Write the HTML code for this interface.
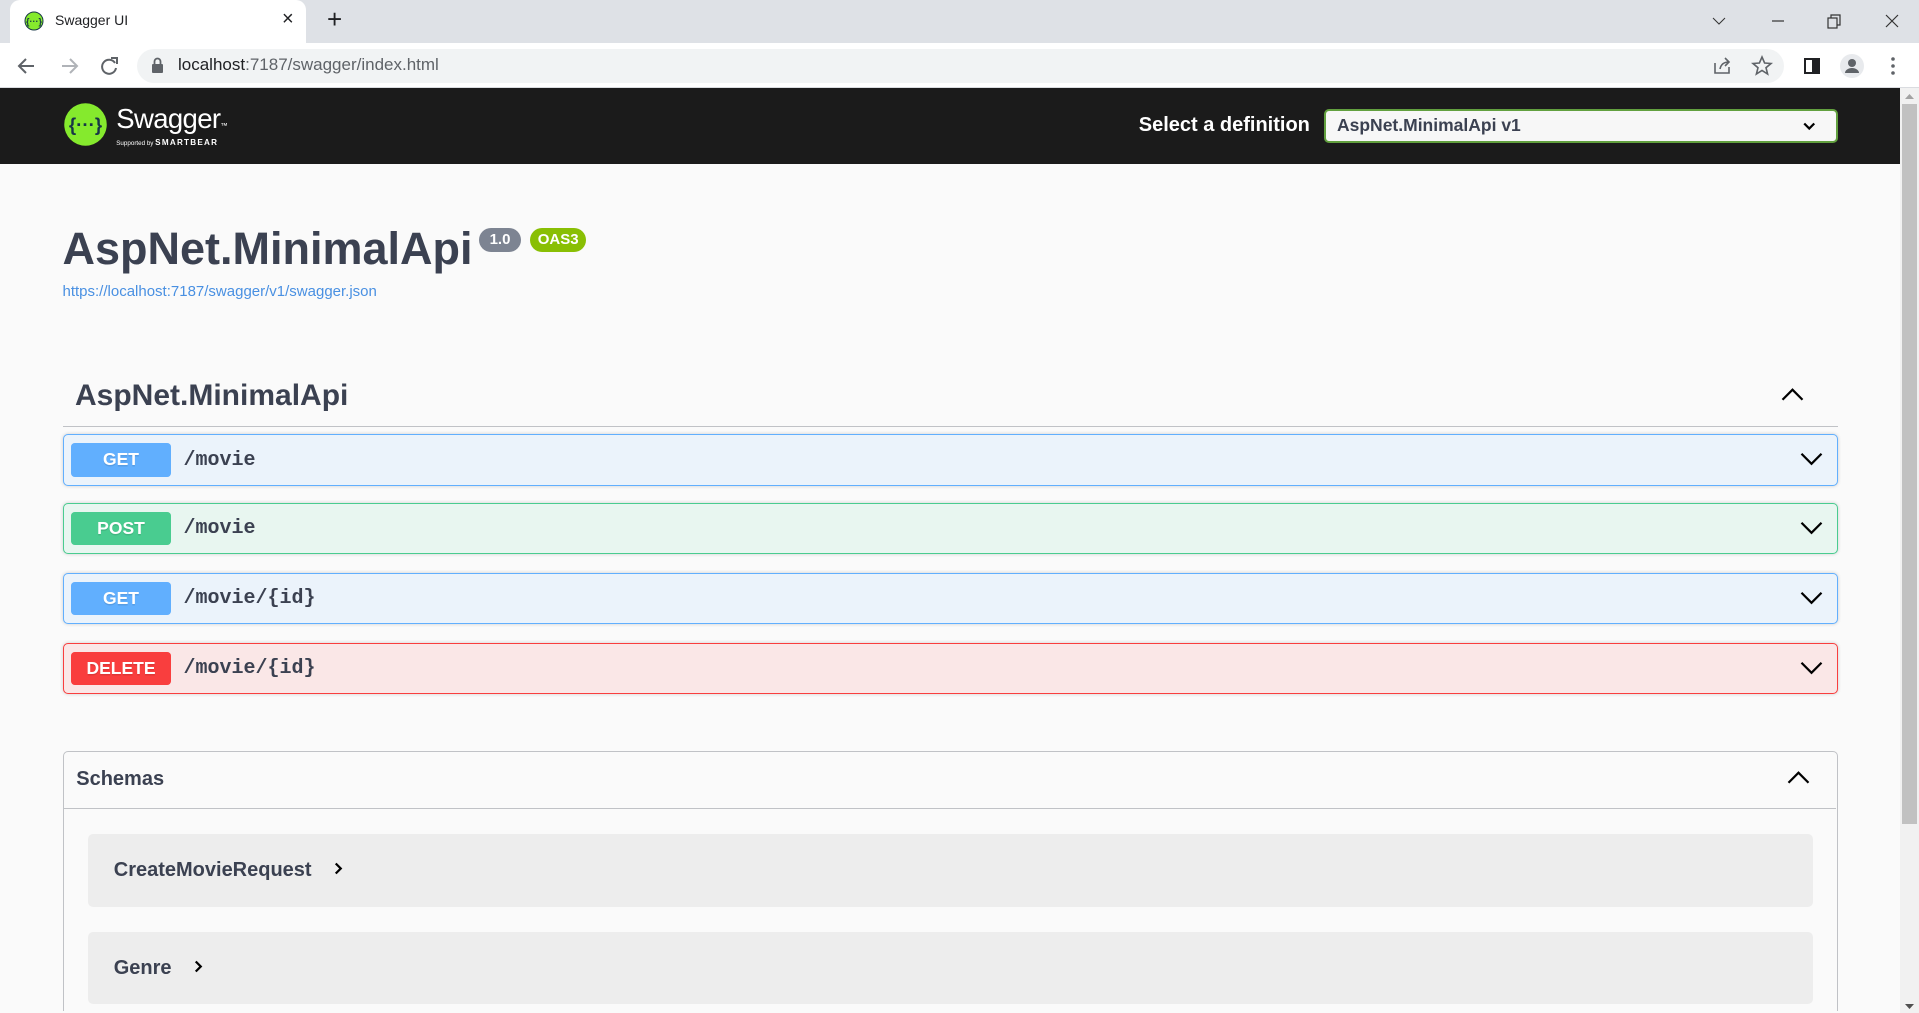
<!DOCTYPE html>
<html><head><meta charset="utf-8"><style>
*{box-sizing:border-box;margin:0;padding:0}
body{width:1919px;height:1013px;overflow:hidden;background:#fafafa;font-family:"Liberation Sans",Arial,sans-serif;position:relative}
.abs{position:absolute}
#tabs{left:0;top:0;width:1919px;height:43px;background:#dee1e6}
#tab{left:10px;top:0;width:296px;height:43px;background:#fff;border-radius:10px 10px 0 0}
#bar{left:0;top:43px;width:1919px;height:45px;background:#fff;border-bottom:1px solid #dadce0}
#omni{left:137px;top:49px;width:1647px;height:34px;background:#f1f3f4;border-radius:17px}
#page{left:0;top:70.4px;width:1520px;height:738px;zoom:1.25;overflow:hidden;background:#fafafa}
#sb{left:1900px;top:88px;width:19px;height:925px;background:#f1f1f1}
.op{position:absolute;left:50px;width:1420px;height:41px;border:1px solid;border-radius:4px;box-shadow:0 0 3px rgba(0,0,0,.19)}
.m{position:absolute;left:6px;top:6px;width:80px;height:27px;border-radius:3px;color:#fff;font-weight:bold;font-size:14px;text-align:center;line-height:27px;text-shadow:0 1px 0 rgba(0,0,0,.1)}
.p{position:absolute;left:96px;top:1px;line-height:39px;font-family:"Liberation Mono",monospace;font-weight:bold;font-size:16px;color:#3b4151}
.chev{position:absolute;right:10px;top:12px}
.model{position:absolute;left:70px;width:1380px;height:58px;background:rgba(0,0,0,.05);border-radius:4px;font-weight:bold;font-size:16px;color:#3b4151;line-height:58px;padding-left:21px}
</style></head><body>
<div id="tabs" class="abs"></div>
<div id="tab" class="abs"></div>
<svg class="abs" style="left:24px;top:11px" width="20" height="20" viewBox="0 0 20 20"><circle cx="10" cy="10" r="9" fill="#85ea2d" stroke="#173647" stroke-width="1"/><text x="10" y="13.5" font-size="9" text-anchor="middle" fill="#173647" font-family="Liberation Sans" font-weight="bold">{···}</text></svg>
<div class="abs" style="left:55px;top:12px;font-size:14px;color:#202124">Swagger UI</div>
<div class="abs" style="left:282px;top:8px;font-size:20px;color:#202124">×</div>
<div class="abs" style="left:327px;top:4px;font-size:26px;color:#202124;font-weight:300">+</div>
<svg class="abs" style="left:1710px;top:12px" width="200" height="20"><path d="M3 6l6 6 6-6" fill="none" stroke="#333" stroke-width="1"/><path d="M62 9h12" stroke="#333" stroke-width="1.2"/><rect x="118" y="6" width="9" height="10" fill="none" stroke="#333" stroke-width="1.2"/><path d="M121 6v-3h9v10h-3" fill="none" stroke="#333" stroke-width="1.2"/><path d="M176 3l12 12M188 3l-12 12" stroke="#333" stroke-width="1.2"/></svg>
<div id="bar" class="abs"></div>
<svg class="abs" style="left:14px;top:54px" width="110" height="24"><path d="M20 12H6M12 5l-7 7 7 7" fill="none" stroke="#5f6368" stroke-width="2"/><path d="M48 12h14M56 5l7 7-7 7" fill="none" stroke="#b0b3b8" stroke-width="2"/><path d="M101 9a7 7 0 1 0 1 5" fill="none" stroke="#5f6368" stroke-width="2"/><path d="M97 4h6v6" fill="none" stroke="#5f6368" stroke-width="2"/></svg>
<div id="omni" class="abs"></div>
<svg class="abs" style="left:150px;top:56px" width="16" height="20"><rect x="2" y="8" width="11" height="9" rx="1" fill="#5f6368"/><path d="M4.5 8V5.5a3 3 0 0 1 6 0V8" fill="none" stroke="#5f6368" stroke-width="1.8"/></svg>
<div class="abs" style="left:178px;top:55px;font-size:17px;color:#202124">localhost<span style="color:#5f6368">:7187/swagger/index.html</span></div>
<svg class="abs" style="left:1710px;top:53px" width="200" height="26"><path d="M5 10v10h14v-6M10 16c1-5 4-7 9-7M15 5l4 4-4 4" fill="none" stroke="#5f6368" stroke-width="1.6"/><path d="M52 4l2.6 6 6.4.5-5 4.2 1.6 6.3L52 17.5 46.4 21l1.6-6.3-5-4.2 6.4-.5z" fill="none" stroke="#5f6368" stroke-width="1.6"/><rect x="95" y="6" width="14" height="14" fill="none" stroke="#202124" stroke-width="2"/><rect x="102" y="6" width="7" height="14" fill="#202124"/><circle cx="142" cy="13" r="12" fill="#e8eaed"/><circle cx="142" cy="10" r="4" fill="#5f6368"/><path d="M135 20a7 5 0 0 1 14 0z" fill="#5f6368"/><circle cx="183" cy="6" r="1.8" fill="#5f6368"/><circle cx="183" cy="13" r="1.8" fill="#5f6368"/><circle cx="183" cy="20" r="1.8" fill="#5f6368"/></svg>

<div id="page" class="abs">
 <div class="abs" style="left:0;top:0;width:1520px;height:61px;background:#1b1b1b"></div>
 <svg class="abs" style="left:50px;top:11px" width="36" height="36" viewBox="0 0 36 36"><circle cx="18" cy="18" r="17" fill="#85ea2d"/><text x="18" y="23" font-size="15" text-anchor="middle" fill="#173647" font-family="Liberation Sans" font-weight="bold">{···}</text></svg>
 <div class="abs" style="left:93px;top:12px;font-size:22px;color:#fff;letter-spacing:-0.5px">Swagger<span style="font-size:6px">™</span></div>
 <div class="abs" style="left:93px;top:40px;font-size:5px;color:#fff">Supported by <b style="font-size:6.5px;letter-spacing:1px">SMARTBEAR</b></div>
 <div class="abs" style="left:911px;top:19px;font-size:16px;font-weight:bold;color:#fff;line-height:22px">Select a definition</div>
 <div class="abs" style="left:1059px;top:17px;width:411px;height:27px;border:2px solid #62a03f;border-radius:4px;background:#f7f7f7;font-size:14px;font-weight:bold;color:#3b4151;line-height:23px;padding-left:9px">AspNet.MinimalApi v1
  <svg style="position:absolute;right:16px;top:8px" width="10" height="8"><path d="M1 2l4 4 4-4" fill="none" stroke="#000" stroke-width="1.8"/></svg></div>

 <div class="abs" style="left:50px;top:106px;font-size:36px;font-weight:bold;color:#3b4151;line-height:44px">AspNet.MinimalApi</div>
 <div class="abs" style="left:383px;top:112px;width:34px;height:19px;border-radius:57px;background:#7d8492;color:#fff;font-size:12px;font-weight:bold;text-align:center;line-height:19px">1.0</div>
 <div class="abs" style="left:424px;top:112px;width:45px;height:19px;border-radius:57px;background:#89bf04;color:#fff;font-size:12px;font-weight:bold;text-align:center;line-height:19px">OAS3</div>
 <div class="abs" style="left:50px;top:156px;font-size:12px;color:#4990e2">https://localhost:7187/swagger/v1/swagger.json</div>

 <div class="abs" style="left:50px;top:223px;width:1420px;height:48px;border-bottom:1px solid rgba(59,65,81,.3)"></div>
 <div class="abs" style="left:60px;top:231px;font-size:24px;font-weight:bold;color:#3b4151;line-height:30px">AspNet.MinimalApi</div>
 <svg class="abs" style="left:1424px;top:238px" width="20" height="14"><path d="M2 11l8-8 8 8" fill="none" stroke="#000" stroke-width="1.8"/></svg>

 <div class="op" style="top:277px;background:#ebf3fb;border-color:#61affe"><div class="m" style="background:#61affe">GET</div><div class="p">/movie</div><svg class="chev" width="20" height="14"><path d="M2 3l8 8 8-8" fill="none" stroke="#000" stroke-width="1.8"/></svg></div>
 <div class="op" style="top:332px;background:#e8f6f0;border-color:#49cc90"><div class="m" style="background:#49cc90">POST</div><div class="p">/movie</div><svg class="chev" width="20" height="14"><path d="M2 3l8 8 8-8" fill="none" stroke="#000" stroke-width="1.8"/></svg></div>
 <div class="op" style="top:388px;background:#ebf3fb;border-color:#61affe"><div class="m" style="background:#61affe">GET</div><div class="p">/movie/{id}</div><svg class="chev" width="20" height="14"><path d="M2 3l8 8 8-8" fill="none" stroke="#000" stroke-width="1.8"/></svg></div>
 <div class="op" style="top:444px;background:#fae7e7;border-color:#f93e3e"><div class="m" style="background:#f93e3e">DELETE</div><div class="p">/movie/{id}</div><svg class="chev" width="20" height="14"><path d="M2 3l8 8 8-8" fill="none" stroke="#000" stroke-width="1.8"/></svg></div>

 <div class="abs" style="left:50px;top:530px;width:1420px;height:260px;border:1px solid rgba(59,65,81,.3);border-radius:4px"></div>
 <div class="abs" style="left:51px;top:576px;width:1418px;height:1px;background:rgba(59,65,81,.3)"></div>
 <div class="abs" style="left:61px;top:543px;font-size:16px;font-weight:bold;color:#3b4151;line-height:20px">Schemas</div>
 <svg class="abs" style="left:1429px;top:545px" width="20" height="14"><path d="M2 11l8-8 8 8" fill="none" stroke="#000" stroke-width="1.8"/></svg>
 <div class="model" style="top:597px">CreateMovieRequest <span style="display:inline-block;margin-left:12px"><svg width="10" height="12"><path d="M3 2l4 4-4 4" fill="none" stroke="#000" stroke-width="1.8"/></svg></span></div>
 <div class="model" style="top:675px">Genre <span style="display:inline-block;margin-left:12px"><svg width="10" height="12"><path d="M3 2l4 4-4 4" fill="none" stroke="#000" stroke-width="1.8"/></svg></span></div>
</div>

<div id="sb" class="abs"></div>
<div class="abs" style="left:1902px;top:104px;width:15px;height:720px;background:#c1c1c1"></div>
<svg class="abs" style="left:1904px;top:92px" width="11" height="8"><path d="M1 7l4.5-5 4.5 5z" fill="#a3a3a3"/></svg>
<svg class="abs" style="left:1904px;top:1003px" width="11" height="8"><path d="M1 1l4.5 5 4.5-5z" fill="#505050"/></svg>
</body></html>
